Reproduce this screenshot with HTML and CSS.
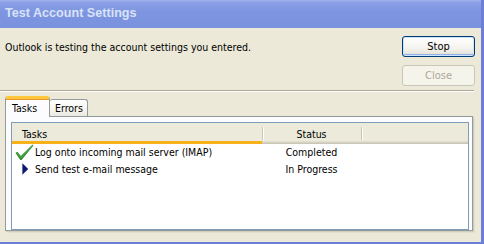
FILE: index.html
```html
<!DOCTYPE html>
<html lang="en">
<head>
    <meta charset="UTF-8">
    <title>Test Account Settings</title>
    <link rel="stylesheet" href="styles.css">
</head>
<body>
    <div class="window">
        <div class="titlebar">Test Account Settings</div>

        <div class="content">
            <div class="top">
                <p class="msg">Outlook is testing the account settings you entered.</p>
                <div class="buttons">
                    <button class="btn btn-default">Stop</button>
                    <button class="btn" disabled>Close</button>
                </div>
            </div>

            <div class="sep"></div>

            <!-- Tabs -->
            <div class="tab-strip">
                <div class="tab active">Tasks</div>
                <div class="tab">Errors</div>
            </div>
            <div class="tab-panel">
                <div class="list">
                    <div class="list-head">
                        <div class="col col-task sorted">Tasks</div>
                        <div class="col col-status">Status</div>
                        <div class="col col-fill"></div>
                    </div>
                    <div class="row">
                        <div class="cell-task">
                            <span class="icon">
                                <svg width="19" height="17" viewBox="0 0 18 16">
                                    <path d="M0.5 8.5 L2.2 7.2 L5.6 11.2 L16.6 0.5 L17.5 1.4 L6.2 15 L5 15 Z" fill="#2a8a2a"/>
                                    <path d="M1.5 8.3 L5.7 13 L16.8 1.2" stroke="#62b862" stroke-width="0.8" fill="none"/>
                                </svg>
                            </span>
                            Log onto incoming mail server (IMAP)
                        </div>
                        <div class="cell-status">Completed</div>
                    </div>
                    <div class="row">
                        <div class="cell-task">
                            <span class="icon">
                                <svg width="19" height="17" viewBox="0 0 18 16">
                                    <path d="M7 2 L12.5 7.5 L7 13 Z" fill="#0a1a6e"/>
                                </svg>
                            </span>
                            Send test e-mail message
                        </div>
                        <div class="cell-status">In Progress</div>
                    </div>
                </div>
            </div>
        </div>
    </div>
</body>
</html>
```

FILE: styles.css
```css
body {
    margin: 0;
    padding: 0;
    font-family: "DejaVu Sans Condensed", "DejaVu Sans", sans-serif;
    font-size: 10.5px;
    color: #000;
}

.window {
    width: 484px;
    height: 244px;
    box-sizing: border-box;
    border-right: 3px solid #6c7ed8;
    border-bottom: 2px solid #6c7ed8;
    display: flex;
    flex-direction: column;
    background: #ece9d8;
}

.titlebar {
    height: 28px;
    line-height: 27px;
    padding-left: 5px;
    font-family: "Liberation Sans", sans-serif;
    font-weight: bold;
    font-size: 12.6px;
    color: #d8e2f8;
    background: linear-gradient(to bottom, #a6b6ef 0, #8ba0e6 2px, #7e96e1 40%, #7a92df 100%);
}

.content {
    flex: 1;
    padding: 0 6px 0 5px;
}

.top {
    display: flex;
    justify-content: space-between;
    height: 58px;
}

.msg {
    margin: 12px 0 0;
    line-height: 14px;
}

.buttons {
    display: flex;
    flex-direction: column;
    gap: 8px;
    margin-top: 8px;
}

.btn {
    width: 73px;
    height: 21px;
    padding: 0;
    font-family: inherit;
    font-size: 11px;
    color: #000;
    border: 1px solid #003c74;
    border-radius: 3px;
    background: linear-gradient(to bottom, #ffffff 0, #f4f3ee 60%, #e6e3d8 90%, #d6d0c5 100%);
}

.btn-default {
    box-shadow: inset 0 0 0 1px #cde4fb, inset 0 -1px 0 1px #8fb1ec;
}

.btn:disabled {
    color: #aca899;
    border-color: #c9c7ba;
    background: #f5f4ea;
}

.sep {
    margin: 4px 0 0 -5px;
    width: 474px;
    height: 1px;
    background: #aca899;
    border-bottom: 1px solid #fff;
}

/* Tabs */
.tab-strip {
    display: flex;
    align-items: flex-end;
    height: 20px;
    margin-top: 4px;
    position: relative;
    z-index: 1;
}

.tab {
    height: 17px;
    line-height: 17px;
    padding: 0 5px;
    box-sizing: border-box;
    border: 1px solid #919b9c;
    border-bottom: none;
    border-radius: 3px 3px 0 0;
    background: linear-gradient(to bottom, #ffffff, #f3f2ec 70%, #ebe9df);
}

.tab.active {
    height: 21px;
    line-height: 18px;
    width: 45px;
    padding-left: 6px;
    margin-bottom: -1px;
    background: #fcfcfe;
    border-top: 3px solid #ffc83c;
    box-shadow: inset 0 1px 0 #e89a2c;
}

.tab.active + .tab {
    border-left: none;
    width: 38px;
}

.tab-panel {
    width: 468px;
    height: 115px;
    box-sizing: border-box;
    border: 1px solid #919b9c;
    background: #fcfcfe;
    padding: 5px 3px 2px 5px;
    box-shadow: 1px 1px 0 #d0cdbf, 2px 2px 0 #e2dfd0;
}

.list {
    height: 106px;
    border: 1px solid #7f9db9;
    background: #fff;
}

.list-head {
    display: flex;
    height: 21px;
    background: #ebeadb;
    box-shadow: inset 0 -1px 0 #cbc7b8, inset 0 -2px 0 #d6d2c2, inset 0 -3px 0 #e2decd;
}

.col {
    height: 18px;
    line-height: 18px;
    padding-top: 2px;
    box-sizing: border-box;
    position: relative;
}

.col-task {
    width: 250px;
    padding-left: 10px;
}

.col-status {
    width: 99px;
    text-align: center;
}

.col-fill {
    flex: 1;
}

.col-status::before,
.col-fill::before {
    content: "";
    position: absolute;
    left: 0;
    top: 4px;
    width: 1px;
    height: 13px;
    background: #c7c5b2;
    border-right: 1px solid #fff;
}

.sorted {
    height: 21px;
    border-bottom: 3px solid #f9b119;
}

.row {
    display: flex;
    height: 17px;
    line-height: 17px;
}

.cell-task {
    width: 250px;
    display: flex;
    align-items: center;
    padding-left: 3px;
    box-sizing: border-box;
}

.icon {
    width: 19px;
    height: 17px;
    margin-right: 1px;
    display: flex;
}

.cell-status {
    width: 99px;
    text-align: center;
}
```
